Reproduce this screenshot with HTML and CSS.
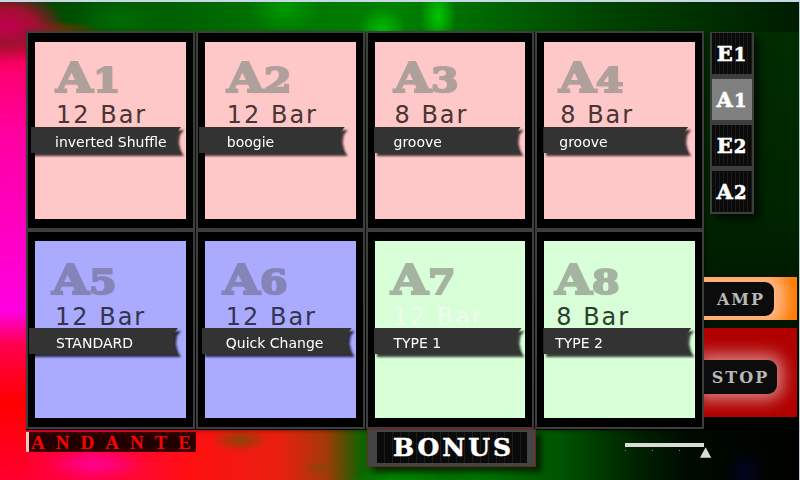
FILE: index.html
```html
<!DOCTYPE html>
<html lang="en">
<head>
    <meta charset="UTF-8">
    <title>Style Select</title>
    <link rel="stylesheet" href="styles.css">
</head>
<body>
    <div class="screen">
        <div class="top-row">
            <div class="pads">
                <div class="cell p1">
                    <div class="pad pink">
                        <div class="pad-name">A<span>1</span></div>
                        <div class="pad-bars">12 Bar</div>
                        <div class="ribbon">inverted Shuffle</div>
                    </div>
                </div>
                <div class="cell p2">
                    <div class="pad pink">
                        <div class="pad-name">A<span>2</span></div>
                        <div class="pad-bars">12 Bar</div>
                        <div class="ribbon">boogie</div>
                    </div>
                </div>
                <div class="cell p3">
                    <div class="pad pink">
                        <div class="pad-name">A<span>3</span></div>
                        <div class="pad-bars">8 Bar</div>
                        <div class="ribbon">groove</div>
                    </div>
                </div>
                <div class="cell p4">
                    <div class="pad pink">
                        <div class="pad-name">A<span>4</span></div>
                        <div class="pad-bars">8 Bar</div>
                        <div class="ribbon">groove</div>
                    </div>
                </div>
                <div class="cell p5">
                    <div class="pad blue">
                        <div class="pad-name">A<span>5</span></div>
                        <div class="pad-bars">12 Bar</div>
                        <div class="ribbon">STANDARD</div>
                    </div>
                </div>
                <div class="cell p6">
                    <div class="pad blue">
                        <div class="pad-name">A<span>6</span></div>
                        <div class="pad-bars">12 Bar</div>
                        <div class="ribbon">Quick Change</div>
                    </div>
                </div>
                <div class="cell p7">
                    <div class="pad green">
                        <div class="pad-name">A<span>7</span></div>
                        <div class="pad-bars faded">12 Bar</div>
                        <div class="ribbon">TYPE 1</div>
                    </div>
                </div>
                <div class="cell p8">
                    <div class="pad green">
                        <div class="pad-name">A<span>8</span></div>
                        <div class="pad-bars">8 Bar</div>
                        <div class="ribbon">TYPE 2</div>
                    </div>
                </div>
            </div>

            <div class="side">
                <div class="variations">
                    <button class="var">E<span>1</span></button>
                    <button class="var active">A<span>1</span></button>
                    <button class="var">E<span>2</span></button>
                    <button class="var">A<span>2</span></button>
                </div>
                <div class="amp-block">
                    <button class="pill amp">AMP</button>
                </div>
                <div class="stop-block">
                    <button class="pill stop">STOP</button>
                </div>
            </div>
        </div>

        <div class="bottom-row">
            <div class="tempo">ANDANTE</div>
            <button class="bonus"><span>BONUS</span></button>
            <div class="slider">
                <div class="slider-line"></div>
                <div class="slider-ticks">
                    <i></i><i></i><i></i>
                    <svg class="slider-thumb" width="12" height="11" viewBox="0 0 12 11"><path d="M6 0 L12 11 L0 11 Z" fill="#d8dcd4"/></svg>
                </div>
            </div>
        </div>
    </div>
</body>
</html>
```

FILE: styles.css
```css
* {
    margin: 0;
    padding: 0;
    box-sizing: border-box;
}

body {
    width: 800px;
    height: 480px;
    overflow: hidden;
    font-family: "DejaVu Sans", sans-serif;
    background: #000;
}

/* the painted backdrop only shows in the strips around the pads */
.screen {
    width: 800px;
    height: 480px;
    padding: 29px 0 0 26px;
    overflow: hidden;
    border-top: 2px solid #c8d8e4;
    border-right: 1px solid #b8c8d0;
    background:
        radial-gradient(ellipse 60px 36px at 6px 24px, #c00050 0%, #a01030 50%, rgba(120, 20, 20, 0) 100%) no-repeat,
        radial-gradient(ellipse 50px 12px at 55px 30px, #803000 0%, rgba(120, 50, 0, 0) 100%) no-repeat,
        radial-gradient(ellipse 18px 30px at 438px 14px, #00c800 0%, rgba(0, 200, 0, 0) 100%) no-repeat,
        radial-gradient(ellipse 24px 26px at 382px 30px, #00c000 0%, rgba(0, 190, 0, 0) 100%) no-repeat,
        radial-gradient(ellipse 36px 24px at 285px 8px, #009800 0%, rgba(0, 150, 0, 0) 100%) no-repeat,
        radial-gradient(ellipse 50px 24px at 120px 18px, #006c00 0%, rgba(0, 100, 0, 0) 100%) no-repeat,
        linear-gradient(90deg, #004000 0, #005800 130px, #007400 280px, #008000 400px, #006c00 470px, #004400 600px, #002c00 720px, #001c00 800px) 0 0 / 800px 30px no-repeat,
        linear-gradient(180deg, #7a1020 0, #e00040 12px, #ff0070 40px, #ff00a0 100px, #ff00c0 190px, #ff00e0 280px, #ff0050 312px, #ff0000 370px, #ff0030 450px) 0 30px / 26px 450px no-repeat,
        radial-gradient(ellipse 50px 15px at 95px 462px, #ff0090 0%, rgba(255, 0, 140, 0) 100%) no-repeat,
        radial-gradient(ellipse 30px 12px at 240px 438px, rgba(110, 80, 0, 0.8) 0%, rgba(150, 60, 0, 0) 100%) no-repeat,
        radial-gradient(ellipse 20px 8px at 320px 466px, rgba(130, 70, 10, 0.7) 0%, rgba(130, 70, 0, 0) 100%) no-repeat,
        radial-gradient(ellipse 50px 16px at 400px 480px, #008c00 0%, rgba(0, 140, 0, 0) 100%) no-repeat,
        radial-gradient(ellipse 20px 25px at 745px 470px, #000420 0%, rgba(0, 4, 32, 0) 100%) no-repeat,
        linear-gradient(90deg, #ff0020 0, #ff0050 90px, #ff1010 190px, #e82010 280px, #a83808 325px, #0c6400 362px, #007400 480px, #005400 560px, #002000 640px, #000a00 690px, #000 800px) 0 428px / 800px 52px no-repeat,
        linear-gradient(180deg, #002e00 0%, #002400 45%, #001200 70%, #000 90%);
}

.top-row {
    display: flex;
    align-items: flex-start;
}

.pads {
    width: 678px;
    display: grid;
    grid-template-columns: repeat(4, 1fr);
    column-gap: 1px;
}

.p1 { --name-x: 21px; --bars-x: 21px; --rib-x: -4px; --rib-w: 150px; --text-x: 24px; }
.p2 { --name-x: 22px; --bars-x: 22px; --rib-x: -6px; --rib-w: 146px; --text-x: 28px; }
.p3 { --name-x: 19px; --bars-x: 20px; --rib-x: -1px; --rib-w: 147px; --text-x: 20px; }
.p4 { --name-x: 15px; --bars-x: 16px; --rib-x: -1px; --rib-w: 145px; --text-x: 16px; }
.p5 { --name-x: 17px; --bars-x: 20px; --rib-x: -6px; --rib-w: 149px; --text-x: 27px; }
.p6 { --name-x: 18px; --bars-x: 21px; --rib-x: -3px; --rib-w: 150px; --text-x: 24px; }
.p7 { --name-x: 16px; --bars-x: 18px; --rib-x: -1px; --rib-w: 148px; --text-x: 20px; }
.p8 { --name-x: 11px; --bars-x: 12px; --rib-x: -1px; --rib-w: 148px; --text-x: 12px; }

.cell {
    height: 199px;
    padding: 9px 7px 8px 7px;
    background: #000;
    border: 2px solid #3e3e3e;
    box-shadow: 2px 2px 4px rgba(0, 0, 0, 0.4);
}

.pad {
    height: 177px;
    padding-top: 11px;
}

.pink { background: #ffc8c8; color: #4a3434; }
.blue { background: #aaaaff; color: #34344e; padding-top: 14px; }
.green { background: #d8ffd8; color: #2c402c; padding-top: 14px; }

.pad-name {
    height: 48px;
    padding-left: var(--name-x);
    font-family: "DejaVu Serif", serif;
    font-size: 41px;
    font-weight: bold;
    line-height: 50px;
    color: #b0a09c;
    -webkit-text-stroke: 2px currentColor;
    text-shadow: 1px 1px 1px rgba(70, 50, 50, 0.25);
    transform: scaleX(1.16);
    transform-origin: var(--name-x) 50%;
}

.pad-name span {
    font-size: 34px;
}

.blue .pad-name { color: #8484b8; }
.green .pad-name { color: #a4b4a0; }

.pad-bars {
    height: 25px;
    margin-top: 1px;
    padding-left: var(--bars-x);
    font-size: 24px;
    line-height: 26px;
    letter-spacing: 2px;
}

.blue .pad-bars,
.green .pad-bars {
    height: 24px;
}

.pad-bars.faded {
    color: #eefcee;
}

.ribbon {
    position: relative;
    width: var(--rib-w);
    height: 26px;
    margin-left: var(--rib-x);
    padding-left: var(--text-x);
    font-size: 14px;
    line-height: 30px;
    color: #fff;
    filter: drop-shadow(3px 3px 1px rgba(0, 0, 0, 0.75));
}

/* cut the tail on the pseudo element so the shadow still follows it */
.ribbon::before {
    content: '';
    position: absolute;
    top: 0;
    left: 0;
    width: 100%;
    height: 100%;
    z-index: -1;
    background: #333;
    clip-path: polygon(0 0, 100% 0, calc(100% - 4px) 5px, calc(100% - 5px) 13px, calc(100% - 3px) 21px, 100% 100%, 0 100%);
}

.side {
    width: 95px;
    display: flex;
    flex-direction: column;
    align-items: flex-start;
    padding-left: 6px;
}

.variations {
    width: 44px;
    margin: 1px 0 63px 0;
    padding: 1px 2px 0 2px;
    background: #3e3e3e;
    box-shadow: 6px 6px 8px rgba(0, 0, 0, 0.6);
}

.var {
    display: block;
    width: 100%;
    height: 41px;
    margin-bottom: 5px;
    border: none;
    background: repeating-linear-gradient(90deg, #0a0a0a 0, #0a0a0a 3px, #1a1a1a 3px, #1a1a1a 4px);
    font-family: "DejaVu Serif", serif;
    font-size: 21px;
    font-weight: bold;
    color: #fff;
    -webkit-text-stroke: 0.6px currentColor;
    letter-spacing: 1px;
}

.var span {
    font-size: 18px;
}

.var:last-child {
    margin-bottom: 2px;
}

.var.active {
    background: #808080;
}

.amp-block {
    width: 93px;
    height: 43px;
    margin: 0 0 8px -6px;
    padding-top: 5px;
    background: #ff7a00;
    overflow: hidden;
}

.stop-block {
    width: 93px;
    height: 89px;
    margin-left: -6px;
    padding-top: 32px;
    background: #b00000;
    overflow: hidden;
}

.pill {
    display: block;
    height: 34px;
    border: none;
    border-radius: 0 9px 9px 0;
    background: #0c0c0c;
    font-family: "DejaVu Serif", serif;
    font-size: 16px;
    font-weight: bold;
    color: #b8b8b8;
    letter-spacing: 2px;
}

.amp {
    width: 70px;
    padding-left: 4px;
    box-shadow: 0 0 14px 12px #ffb47c;
}

.stop {
    width: 73px;
    padding-left: 0;
    box-shadow: 0 0 16px 6px #d88080;
}

.bottom-row {
    display: flex;
    align-items: flex-start;
}

.tempo {
    width: 170px;
    height: 20px;
    margin-top: 3px;
    padding-left: 2px;
    background: #200000;
    border-left: 3px solid #f0c8c0;
    box-shadow: inset 0 0 6px #600000;
    font-family: "Liberation Serif", serif;
    font-size: 19px;
    font-weight: bold;
    line-height: 21px;
    letter-spacing: 11px;
    color: #ff0000;
}

.bonus {
    width: 169px;
    height: 38px;
    margin-left: 171px;
    border: 1px solid #7a2020;
    background: #444;
    box-shadow: 6px 5px 6px rgba(0, 0, 0, 0.6);
}

.bonus span {
    display: block;
    height: 31px;
    margin: 2px 8px 3px 9px;
    padding-left: 3px;
    background: repeating-linear-gradient(90deg, #0a0a0a 0, #0a0a0a 7px, #1c1c1c 7px, #1c1c1c 8px);
    font-family: "DejaVu Serif", serif;
    font-size: 25px;
    font-weight: bold;
    line-height: 31px;
    color: #fff;
    letter-spacing: 3px;
    -webkit-text-stroke: 0.5px #fff;
}

.slider {
    width: 86px;
    margin: 14px 0 0 89px;
}

.slider-line {
    width: 79px;
    height: 4px;
    background: #d8dcd4;
}

.slider-ticks {
    display: flex;
    align-items: flex-start;
    height: 11px;
}

.slider-ticks i {
    width: 1px;
    height: 1px;
    margin: 3px 26px 0 0;
    background: #8a9a8a;
}

.slider-thumb {
    margin-left: -6px;
}
```
